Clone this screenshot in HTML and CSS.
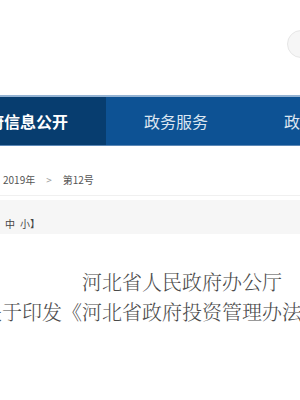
FILE: index.html
```html
<!DOCTYPE html>
<html lang="zh-CN">
<head>
    <meta charset="UTF-8">
    <meta name="viewport" content="width=device-width, initial-scale=1.0">
    <title>河北省人民政府办公厅</title>
    <link rel="stylesheet" href="styles.css">
</head>
<body>
    <!-- Header -->
    <div class="top">
        <div class="search"></div>
    </div>

    <!-- Main nav -->
    <div class="nav">
        <div class="nav-inner">
            <a class="tab active">政府信息公开</a>
            <a class="tab">政务服务</a>
            <a class="tab">政民互动</a>
        </div>
    </div>

    <!-- Breadcrumb -->
    <div class="crumb">
        <span>2019年</span>
        <span class="sep">&gt;</span>
        <span>第12号</span>
    </div>

    <!-- Font size bar -->
    <div class="fontbar">
        <span>中</span>
        <span>小】</span>
    </div>

    <!-- Title -->
    <div class="title">
        <p>河北省人民政府办公厅</p>
        <p>关于印发《河北省政府投资管理办法》的通知</p>
    </div>
</body>
</html>
```

FILE: styles.css
```css
* {
    margin: 0;
    padding: 0;
    box-sizing: border-box;
}

body {
    width: 300px;
    overflow: hidden;
    background: #fff;
    font-family: "Noto Sans CJK SC", sans-serif;
    color: #333;
}

.top {
    height: 95px;
    display: flex;
    justify-content: flex-end;
    padding-top: 30px;
}

.search {
    width: 60px;
    height: 28px;
    margin-right: -47px;
    border-radius: 14px;
    background: #f6f6f6;
    border: 1px solid #e6e6e6;
}

.nav {
    border-top: 2px solid #94b3d3;
    border-bottom: 1px solid #5c88b6;
    background: #0d5294;
    height: 51px;
    overflow: hidden;
}

.nav-inner {
    display: flex;
    margin-left: -66px;
    white-space: nowrap;
}

.tab {
    padding: 0 38px;
    line-height: 48px;
    font-size: 16px;
    color: #dce6f1;
}

.tab.active {
    background: #073d6f;
    color: #fff;
    font-weight: bold;
}

.crumb {
    height: 50px;
    display: flex;
    align-items: flex-end;
    gap: 11px;
    padding: 0 0 8px 3px;
    border-bottom: 1px solid #f0f0f0;
    font-size: 10px;
    line-height: 14px;
    color: #555;
}

.crumb .sep {
    color: #999;
}

.fontbar {
    margin-top: 4px;
    height: 34px;
    padding: 17px 0 0 5px;
    background: #f6f6f6;
    display: flex;
    gap: 5px;
    font-size: 10px;
    line-height: 14px;
    color: #444;
}

.title {
    width: 364px;
    margin-top: 33px;
    display: flex;
    flex-direction: column;
    align-items: center;
    white-space: nowrap;
    font-family: "Noto Serif CJK SC", "Noto Sans CJK SC", serif;
    font-weight: 300;
    font-size: 20px;
    line-height: 30px;
    color: #4a4a4a;
}
```
